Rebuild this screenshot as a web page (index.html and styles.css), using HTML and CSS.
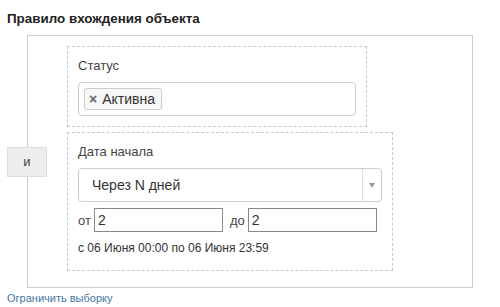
FILE: index.html
```html
<!DOCTYPE html>
<html lang="ru">
<head>
    <meta charset="UTF-8">
    <title>Правило вхождения объекта</title>
    <link rel="stylesheet" href="styles.css">
</head>
<body>
    <h3 class="title">Правило вхождения объекта</h3>
    <div class="rule">
        <button class="joiner">и</button>
        <div class="rule-box">
            <div class="condition">
                <div class="label">Статус</div>
                <div class="tag-input">
                    <span class="tag"><span class="tag-remove">×</span>Активна</span>
                </div>
            </div>
            <div class="condition">
                <div class="label">Дата начала</div>
                <div class="select">
                    <span class="select-value">Через N дней</span>
                    <span class="select-arrow"></span>
                </div>
                <div class="range">
                    <span>от</span>
                    <input class="num" type="text" value="2">
                    <span class="to">до</span>
                    <input class="num" type="text" value="2">
                </div>
                <div class="hint">с 06 Июня 00:00 по 06 Июня 23:59</div>
            </div>
        </div>
    </div>
    <a class="limit" href="#">Ограничить выборку</a>
</body>
</html>
```

FILE: styles.css
```css
body {
    margin: 0;
    padding: 0 7px;
    font-family: "Liberation Sans", Arial, sans-serif;
    color: #333;
    background: #fff;
}

.title {
    margin: 10px 0 7px;
    font-size: 13.4px;
    line-height: 18px;
    font-weight: bold;
    color: #222;
}

.rule {
    display: flex;
    align-items: center;
}

.joiner {
    position: relative;
    z-index: 1;
    width: 40px;
    height: 30px;
    margin-right: -20px;
    padding: 0;
    background: #eee;
    border: 1px solid #ddd;
    font-family: inherit;
    font-size: 13px;
    color: #444;
}

.rule-box {
    width: 446px;
    box-sizing: border-box;
    border: 1px solid #ccc;
    padding: 10px 0 16px 39px;
    display: flex;
    flex-direction: column;
    align-items: flex-start;
    gap: 5px;
}

.condition {
    border: 1px dashed #c8c8c8;
    padding: 10px;
}

.label {
    font-size: 13px;
    line-height: 18px;
    color: #444;
    margin-bottom: 7px;
}

.tag-input {
    width: 278px;
    height: 34px;
    box-sizing: border-box;
    border: 1px solid #ccc;
    border-radius: 4px;
    padding: 5px;
}

.tag {
    display: inline-flex;
    align-items: center;
    height: 22px;
    box-sizing: border-box;
    padding: 0 6px 0 4px;
    border: 1px solid #ccc;
    border-radius: 3px;
    background: #f7f7f7;
    font-size: 14px;
    color: #333;
}

.tag-remove {
    font-weight: bold;
    font-size: 14px;
    color: #666;
    margin-right: 5px;
}

.select {
    width: 304px;
    height: 34px;
    box-sizing: border-box;
    border: 1px solid #ccc;
    border-radius: 4px;
    display: flex;
    align-items: stretch;
}

.select-value {
    flex: 1;
    padding-left: 13px;
    font-size: 14px;
    line-height: 32px;
    color: #333;
}

.select-arrow {
    width: 18px;
    border-left: 1px solid #ddd;
    display: flex;
    align-items: center;
    justify-content: center;
}

.select-arrow::after {
    content: "";
    border-left: 3px solid transparent;
    border-right: 3px solid transparent;
    border-top: 5px solid #999;
}

.range {
    display: flex;
    align-items: center;
    margin-top: 6px;
    font-size: 13px;
    color: #444;
}

.num {
    width: 129px;
    height: 24px;
    box-sizing: border-box;
    margin: 0 0 0 3px;
    padding: 0 3px;
    border: 1px solid #888;
    font-family: inherit;
    font-size: 14px;
    color: #333;
}

.to {
    margin-left: 7px;
}

.hint {
    margin: 8px 0 4px;
    font-size: 12px;
    line-height: 16px;
    color: #333;
}

.limit {
    display: block;
    margin-top: 2px;
    font-size: 11px;
    line-height: 16px;
    color: #4476a8;
    text-decoration: none;
}
```
